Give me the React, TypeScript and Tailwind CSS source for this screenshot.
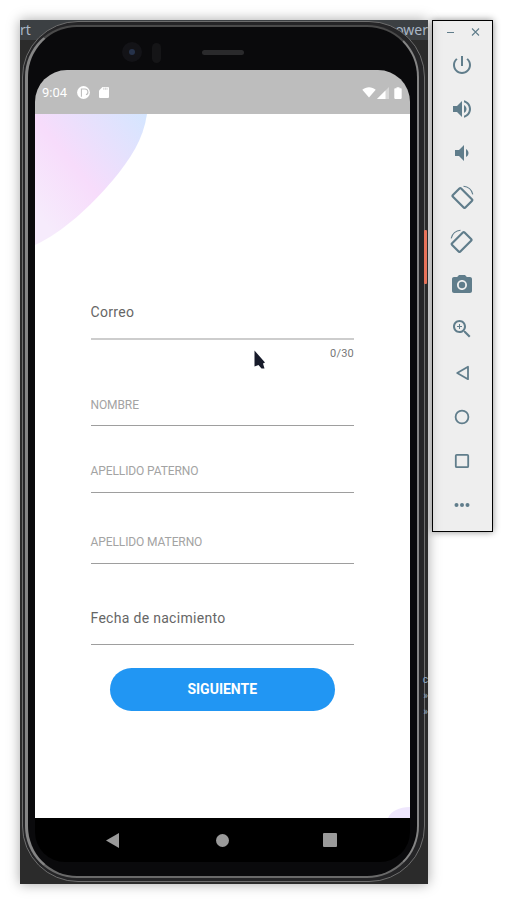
const MUTED = "#607d8b";

function Tool({ d, flip, children }: { d?: string; flip?: boolean; children?: React.ReactNode }) {
  return (
    <div className="h-[44px] flex items-center justify-center pr-[1px]">
      <svg width="24" height="24" viewBox="0 0 24 24" fill={MUTED} style={flip ? { transform: "scaleX(-1)" } : undefined}>
        {d && <path d={d} />}
        {children}
      </svg>
    </div>
  );
}

function Rotate({ flip }: { flip?: boolean }) {
  return (
    <Tool flip={flip}>
      <rect x="6.6" y="4.2" width="11.6" height="17.6" rx="1.2" transform="rotate(-45 12.4 13)" fill="none" stroke={MUTED} strokeWidth="2.2" />
      <path d="M13.5 1.2a10.5 10.5 0 0 1 9.3 8.2" fill="none" stroke={MUTED} strokeWidth="1.1" />
    </Tool>
  );
}

function Toolbar() {
  return (
    <div className="ml-1 w-[61px] h-[512px] bg-[#eeeeee] border border-black shadow-[0_0_7px_rgba(0,0,0,0.45)] flex flex-col">
      <div className="h-[22px] pt-[4px] flex items-start justify-center gap-[16px]">
        <svg width="9" height="14" viewBox="0 0 9 14"><path d="M1 7.5h7" stroke={MUTED} strokeWidth="1" /></svg>
        <svg width="9" height="14" viewBox="0 0 9 14"><path d="M1 3.5l7 7M8 3.5l-7 7" stroke={MUTED} strokeWidth="1.1" /></svg>
      </div>
      <Tool d="M13 3h-2v10h2V3zm4.83 2.17l-1.42 1.42C17.99 7.86 19 9.81 19 12c0 3.87-3.13 7-7 7s-7-3.13-7-7c0-2.19 1.01-4.14 2.58-5.42L6.17 5.17C4.23 6.82 3 9.26 3 12c0 4.97 4.03 9 9 9s9-4.03 9-9c0-2.74-1.23-5.18-3.17-6.83z" />
      <Tool d="M3 9v6h4l5 5V4L7 9H3zm13.5 3c0-1.77-1.02-3.29-2.5-4.03v8.05c1.48-.73 2.5-2.25 2.5-4.02zM14 3.23v2.06c2.89.86 5 3.54 5 6.71s-2.11 5.85-5 6.71v2.06c4.01-.91 7-4.49 7-8.77s-2.99-7.86-7-8.77z" />
      <Tool d="M18.5 12c0-1.77-1.02-3.29-2.5-4.03v8.05c1.48-.73 2.5-2.25 2.5-4.02zM5 9v6h4l5 5V4L9 9H5z" />
      <Rotate />
      <Rotate flip />
      <Tool d="M9 2L7.17 4H4c-1.1 0-2 .9-2 2v12c0 1.1.9 2 2 2h16c1.1 0 2-.9 2-2V6c0-1.1-.9-2-2-2h-3.17L15 2H9zm3 15c-2.76 0-5-2.24-5-5s2.24-5 5-5 5 2.24 5 5-2.24 5-5 5z">
        <circle cx="12" cy="12" r="3.2" />
      </Tool>
      <Tool d="M15.5 14h-.79l-.28-.27C15.41 12.59 16 11.11 16 9.5 16 5.91 13.09 3 9.5 3S3 5.91 3 9.5 5.91 16 9.5 16c1.61 0 3.09-.59 4.23-1.57l.27.28v.79l5 4.99L20.49 19l-4.99-5zm-6 0C7.01 14 5 11.99 5 9.5S7.01 5 9.5 5 14 7.01 14 9.5 11.99 14 9.5 14zM12 10h-2v2H9v-2H7V9h2V7h1v2h2v1z" />
      <Tool>
        <path d="M18 5.8v12.4L7.2 12z" fill="none" stroke={MUTED} strokeWidth="1.8" strokeLinejoin="round" />
      </Tool>
      <Tool>
        <circle cx="12" cy="12" r="6.4" fill="none" stroke={MUTED} strokeWidth="1.8" />
      </Tool>
      <Tool>
        <rect x="5.8" y="5.8" width="12.4" height="12.4" rx="1" fill="none" stroke={MUTED} strokeWidth="1.8" />
      </Tool>
      <Tool>
        <circle cx="6.5" cy="12" r="2" />
        <circle cx="12" cy="12" r="2" />
        <circle cx="17.5" cy="12" r="2" />
      </Tool>
    </div>
  );
}

function StatusBar() {
  return (
    <div className="h-[44px] bg-[#bdbdbd] rounded-t-[32px] flex items-center pl-[7px] pr-[8px] pt-[1px] text-white shrink-0">
      <span className="text-[13px] font-normal leading-none">9:04</span>
      <svg className="ml-[10px]" width="13" height="13" viewBox="0 0 13 13">
        <circle cx="6.5" cy="6.5" r="6.4" fill="#fff" />
        <path d="M4.4 10.8V3h3.6a3 3 0 0 1 1 5.8" fill="none" stroke="#bdbdbd" strokeWidth="1.1" />
      </svg>
      <svg className="ml-[9px]" width="10" height="11" viewBox="0 0 10 11">
        <path d="M3.5 0H9a1 1 0 0 1 1 1v9a1 1 0 0 1-1 1H1a1 1 0 0 1-1-1V3.5z" fill="#fff" />
        <path d="M4.8 0.6v2.2M6.4 0.6v2.2M8 0.6v2.2" stroke="#bdbdbd" strokeWidth="0.7" />
      </svg>
      <div className="ml-auto flex items-center">
        <svg width="14" height="11" viewBox="0 0 14 11"><path d="M0.3 2.8C4 -0.6 10 -0.6 13.7 2.8L7 10.6z" fill="#fff" /></svg>
        <svg className="ml-px" width="12" height="12" viewBox="0 0 12 12">
          <path d="M12 0v12H0z" fill="#fff" opacity="0.4" />
          <path d="M8.5 3.5v8.5H0z" fill="#fff" />
        </svg>
        <svg className="ml-[5px]" width="8" height="12" viewBox="0 0 8 12">
          <path d="M2.5 0.3h3v1h1.4a.8.8 0 0 1 .8.8v9a.8.8 0 0 1-.8.8H1.1a.8.8 0 0 1-.8-.8v-9a.8.8 0 0 1 .8-.8h1.4z" fill="#fff" />
        </svg>
      </div>
    </div>
  );
}

function Field({ label, upper, mt, pb }: { label: string; upper?: boolean; mt: string; pb: string }) {
  return (
    <div className={`${mt} ${pb} border-b border-[#9e9e9e]`}>
      <div className={upper ? "text-[12px] leading-[14px] tracking-[-0.1px] text-[#a3a3a3]" : "text-[14px] tracking-[0.3px] leading-[16px] text-[#666666]"}>{label}</div>
    </div>
  );
}

function Form() {
  return (
    <div className="relative pl-[55.5px] pr-[56px] pt-[190px] flex-1">
      <div className="pb-[18px] border-b-2 border-[#cdcdcd]">
        <div className="text-[14px] tracking-[0.3px] leading-[16px] text-[#666666]">Correo</div>
      </div>
      <div className="mt-[7px] text-right text-[11px] leading-[13px] tracking-[0.2px] text-[#777777]">0/30</div>
      <Field upper label="NOMBRE" mt="mt-[38px]" pb="pb-[13px]" />
      <Field upper label="APELLIDO PATERNO" mt="mt-[38px]" pb="pb-[14px]" />
      <Field upper label="APELLIDO MATERNO" mt="mt-[42px]" pb="pb-[14px]" />
      <Field label="Fecha de nacimiento" mt="mt-[46px]" pb="pb-[18px]" />
      <div className="mt-[23px] mx-[19px] h-[43px] rounded-full bg-[#2196f3] flex items-center justify-center text-white text-[14px] font-bold">
        SIGUIENTE
      </div>
    </div>
  );
}

function NavBar() {
  return (
    <div className="h-[44px] bg-black rounded-b-[30px] flex items-center pl-[71px] shrink-0">
      <svg width="13" height="15" viewBox="0 0 13 15"><path d="M13 0v15L0 7.5z" fill="#9a9a9a" /></svg>
      <svg className="ml-[97px]" width="13" height="13" viewBox="0 0 13 13"><circle cx="6.5" cy="6.5" r="6.5" fill="#9a9a9a" /></svg>
      <svg className="ml-[94px]" width="14" height="14" viewBox="0 0 14 14"><rect width="14" height="14" rx="1" fill="#9a9a9a" /></svg>
    </div>
  );
}

function Cursor() {
  return (
    <svg className="absolute left-[219px] top-[236px]" width="12" height="20" viewBox="0 0 12 20">
      <path d="M0.5 0.5L11 12.5L9 13.5L10.5 18.5L7.5 18.5L4.5 15L0.5 16.5z" fill="#171b2a" />
    </svg>
  );
}

export default function App() {
  return (
    <div className="w-[513px] h-[904px] bg-white overflow-hidden flex items-start pt-5 pl-5 font-['Roboto',sans-serif]">
      <div className="relative w-[408px] h-[864px] bg-[#2b2b2b] shadow-[0_0_12px_rgba(0,0,0,0.35)] overflow-hidden">
        <div className="absolute inset-x-0 top-0 h-[20px] bg-[#3c4043] flex justify-between items-center text-[14px] leading-none text-[#a9b7c6] font-['Noto_Sans',sans-serif]">
          <span>rt</span>
          <span>ower</span>
        </div>
        <div className="relative ml-[2px] mt-[1px] w-[403px] h-[861px] rounded-[56px] bg-[#252527] border border-[#6e6e6e] pl-[2px] pt-[3px]">
          <div className="w-[394px] h-[853px] rounded-[52px] bg-[#0a0a0c] border-2 border-l-[3px] border-[#858585] border-t-[#4a4a4a] border-b-[#6a6a6a]">
            <div className="relative h-[43px]">
              <div className="absolute left-[94px] top-[15px] w-[20px] h-[20px] rounded-full bg-[#131317] flex items-center justify-center">
                <div className="w-[6px] h-[6px] rounded-full bg-[#26324a]" />
              </div>
              <div className="absolute left-[124px] top-[16px] w-[9px] h-[20px] rounded-full bg-[#151517]" />
              <div className="absolute left-[174px] top-[23px] w-[42px] h-[5px] rounded-full bg-[#2a2a2c]" />
            </div>
            <div className="ml-[7px] w-[375px] h-[792px] flex flex-col">
              <StatusBar />
              <div className="relative flex-1 bg-white overflow-hidden flex flex-col">
                <svg className="absolute left-0 top-0" width="114" height="132" viewBox="0 0 114 132">
                  <defs>
                    <linearGradient id="blob" x1="100%" y1="0%" x2="10%" y2="85%">
                      <stop offset="0" stopColor="#d4e6ff" />
                      <stop offset="0.6" stopColor="#f7dcfb" />
                      <stop offset="1" stopColor="#f6ebfc" />
                    </linearGradient>
                  </defs>
                  <path d="M0 0H112C108 26 96 44 78 66C56 92 28 118 0 131z" fill="url(#blob)" />
                </svg>
                <svg className="absolute right-0 bottom-0" width="22" height="11" viewBox="0 0 22 11">
                  <path d="M0 11C3 4 11 0 22 0V11z" fill="#efe7fd" />
                </svg>
                <Form />
                <Cursor />
              </div>
              <NavBar />
            </div>
          </div>
        </div>
        <div className="absolute right-[1px] top-[210px] w-[3px] h-[54px] bg-[#e8735a] rounded-[1px]" />
        <div className="absolute right-0 top-[655px] flex flex-col items-end gap-[6px] text-[10px] leading-[10px] text-[#8fa8c0]">
          <span>c</span>
          <span>»</span>
          <span>»</span>
        </div>
      </div>
      <Toolbar />
    </div>
  );
}
